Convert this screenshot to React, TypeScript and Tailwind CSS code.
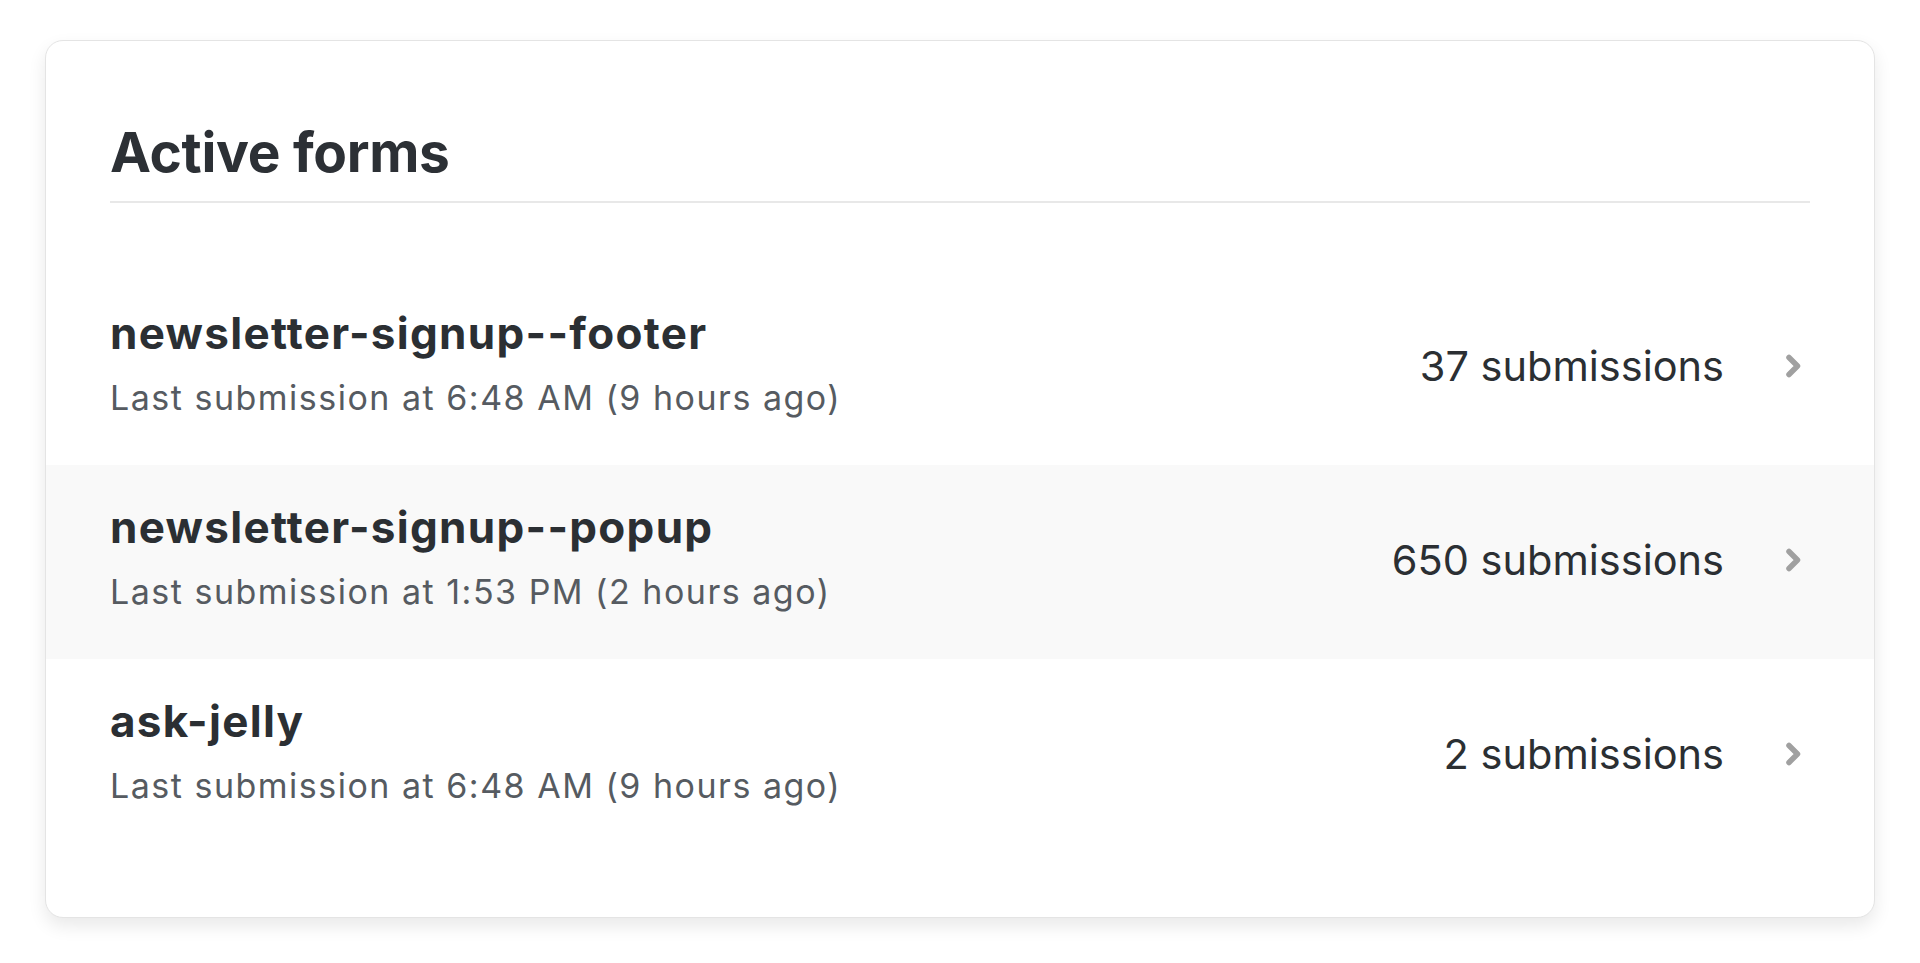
type FormRow = {
  name: string;
  lastSubmission: string;
  count: number;
};

const forms: FormRow[] = [
  { name: "newsletter-signup--footer", lastSubmission: "Last submission at 6:48 AM (9 hours ago)", count: 37 },
  { name: "newsletter-signup--popup", lastSubmission: "Last submission at 1:53 PM (2 hours ago)", count: 650 },
  { name: "ask-jelly", lastSubmission: "Last submission at 6:48 AM (9 hours ago)", count: 2 },
];

const Chevron = () => (
  <svg width="20" height="28" viewBox="0 0 20 28" fill="none" className="shrink-0">
    <polyline
      points="5,5.5 13.5,14 5,22.5"
      stroke="#a0a0a0"
      strokeWidth="5.5"
      strokeLinecap="round"
      strokeLinejoin="round"
    />
  </svg>
);

const FormItem = ({ form, striped }: { form: FormRow; striped: boolean }) => (
  <div
    className={`flex h-[194px] items-center justify-between px-[64px] ${striped ? "bg-[#f9f9f9]" : "bg-white"}`}
  >
    <div className="mb-[10px] flex flex-col">
      <span className="text-[44px] leading-[44px] font-bold tracking-[1.3px] text-[#2b2f33]">{form.name}</span>
      <span className="mt-[26px] text-[34px] leading-[34px] tracking-[1.5px] text-[#565b61]">{form.lastSubmission}</span>
    </div>
    <div className="mb-[4px] flex items-center gap-[60px] pr-[6px]">
      <span className="text-[41.5px] leading-[42px] text-[#2b2f33]">{form.count} submissions</span>
      <Chevron />
    </div>
  </div>
);

export default function App() {
  return (
    <div className="min-h-screen bg-white pt-[40px] px-[45px] font-['Inter','Noto_Sans',sans-serif]">
      <div className="rounded-[18px] border border-[#e4e4e4] bg-white shadow-[0_8px_18px_rgba(0,0,0,0.09)]">
        <div className="px-[64px] pt-[83px]">
          <h2 className="pb-[21px] text-[55px] leading-[56px] font-bold tracking-[-0.3px] text-[#2c3035]">
            Active forms
          </h2>
          <div className="h-[2px] bg-[#e8e8e8]" />
        </div>
        <div className="mt-[68px] pb-[64px]">
          {forms.map((form, i) => (
            <FormItem key={form.name} form={form} striped={i === 1} />
          ))}
        </div>
      </div>
    </div>
  );
}
